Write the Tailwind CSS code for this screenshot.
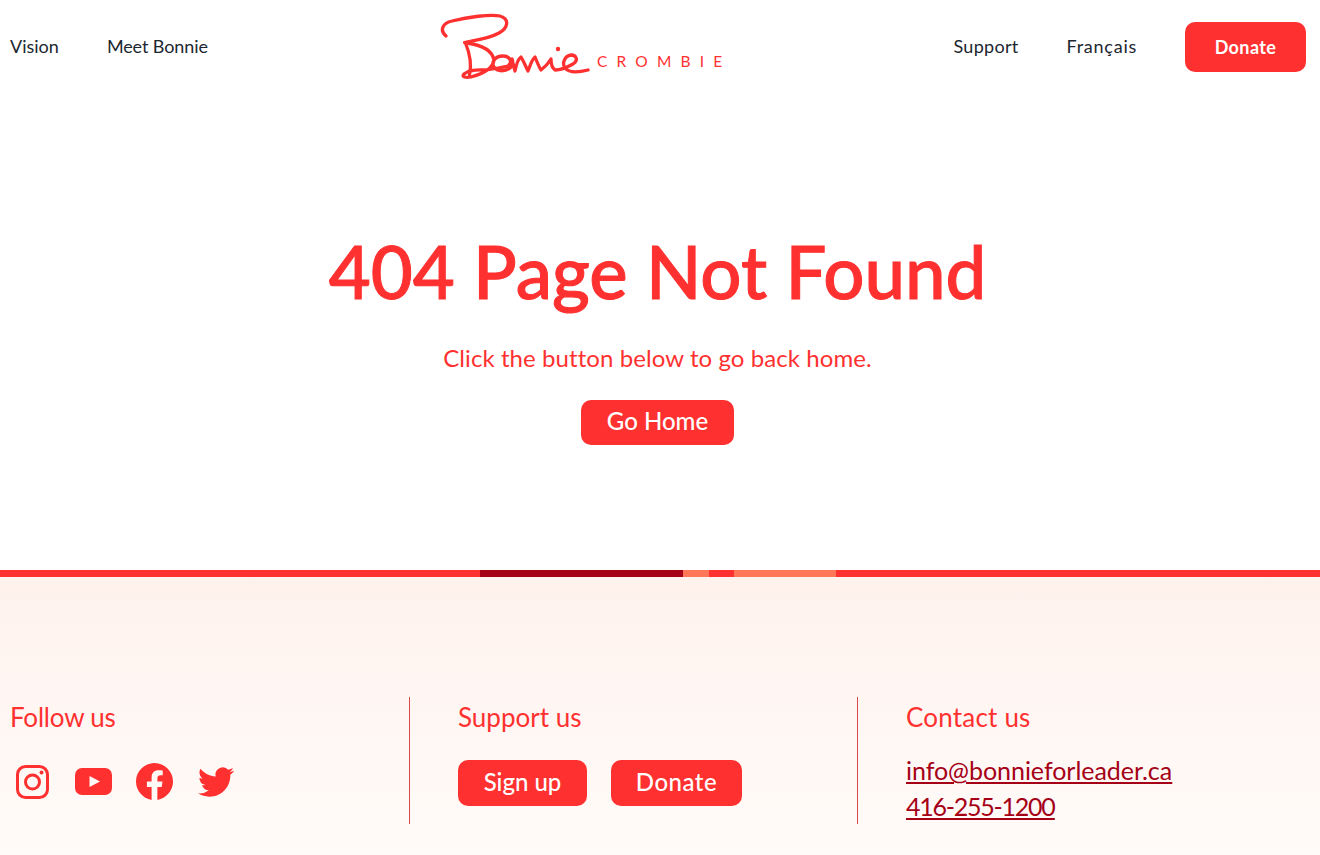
<!DOCTYPE html>
<html lang="en">

<head>
    <meta charset="UTF-8">
    <meta name="viewport" content="width=device-width, initial-scale=1.0">
    <title>Page Not Found</title>
    <script src="https://cdn.jsdelivr.net/npm/@tailwindcss/browser@4"></script>
</head>

<body class="bg-white font-['Lato',sans-serif] h-[855px] overflow-hidden flex flex-col">
    <header class="h-[94px] flex items-center pl-[10px] pr-[14px]">
        <nav class="flex gap-[48px] pb-[1px] text-[18px] text-[#1c2730] w-[430px]">
            <a href="#">Vision</a>
            <a href="#" class="tracking-[-0.1px]">Meet Bonnie</a>
        </nav>
        <a href="#" class="flex items-end">
            <svg class="w-[152px] h-[70px]" viewBox="0 0 152 70" fill="none" stroke="#ff3130" stroke-width="3.3" stroke-linecap="round" stroke-linejoin="round">
                <path d="M6 24C-1 18 3 11 12 9C28 5 50 2 60 4C70 7 68 16 59 21C48 27 36 28 24.5 30.5"/>
                <path d="M25.5 31C30 42 32 52 29.5 63"/>
                <path d="M27 31C42 33 52 38 54 48C53 57 42 62 31 65C26 66 21 65 24 62C30 57 38 58 45 58C52 57 60 56 68 54C73 50 70 44 63 44C55 44 51 50 54 55C57 60 66 60 71 55C73 52 73 49 72 47C73 52 74 55 75 59C76 54 78 47 81 45C84 50 86 55 88 59C90 54 92 47 95 45C97 50 99 55 101 58C105 55 108 52 111 47C111 52 112 56 115 58C120 58 126 56 133 52C139 48 136 43 131 43C124 44 122 52 125 56C129 61 140 60 148 58"/>
                <circle cx="118" cy="37" r="2.2" fill="#ff3130" stroke="none"/>
            </svg>
            <span class="text-[15.5px] leading-[16px] tracking-[9.2px] text-[#ff3130] ml-[5px] mb-[13px] mr-[-9px]">CROMBIE</span>
        </a>
        <div class="ml-auto flex items-center justify-end gap-[48px] text-[18px] text-[#1c2730]">
            <a href="#" class="pb-[1px] tracking-[0.3px]">Support</a>
            <a href="#" class="pb-[1px] tracking-[0.75px]">Français</a>
            <a href="#" class="w-[121px] h-[50px] flex items-center justify-center bg-[#ff3130] text-white font-bold tracking-[0.4px] rounded-[10px]">Donate</a>
        </div>
    </header>

    <main class="h-[476px] flex flex-col items-center pt-[137px] pr-[5px]">
        <h1 class="text-[72.5px] leading-[80px] font-medium text-[#ff3130] [-webkit-text-stroke:1px_#ff3130]">404 Page Not Found</h1>
        <p class="mt-[31px] text-[24px] leading-[32px] tracking-[0.08px] text-[#ff3130]">Click the button below to go back home.</p>
        <a href="#" class="mt-[26px] w-[153px] h-[45px] pb-[3px] flex items-center justify-center bg-[#ff3130] text-white text-[24px] font-medium rounded-[10px]">Go Home</a>
    </main>

    <div class="h-[7px] flex shrink-0">
        <div class="w-[480px] bg-[#ff3130]"></div>
        <div class="w-[203px] bg-[#a50016]"></div>
        <div class="w-[26px] bg-[#ff7757]"></div>
        <div class="w-[25px] bg-[#ff3130]"></div>
        <div class="w-[102px] bg-[#ff7757]"></div>
        <div class="flex-1 bg-[#ff3130]"></div>
    </div>

    <footer class="flex-1 bg-linear-to-b from-[#fff2ed] to-[#fffbf9] pt-[120px] flex items-start">
        <div class="w-[410px] h-[127px] pl-[10px] border-r border-[#d9484a]">
            <h2 class="text-[26px] leading-[40px] tracking-[-0.2px] text-[#ff3130]">Follow us</h2>
            <div class="mt-[26px] flex items-center">
                <svg class="ml-[6px] w-[33px] h-[34px]" viewBox="0 0 33 34" fill="none" stroke="#ff3130" stroke-width="3">
                    <rect x="1.5" y="1.5" width="30" height="31" rx="8"/>
                    <circle cx="16.5" cy="17" r="7"/>
                    <circle cx="25.5" cy="7.5" r="2" fill="#ff3130" stroke="none"/>
                </svg>
                <svg class="ml-[26px] w-[37px] h-[27px]" viewBox="0 0 37 27">
                    <rect width="37" height="27" rx="7" fill="#ff3130"/>
                    <path d="M14.5 8L25 13.5L14.5 19z" fill="#fff8f6"/>
                </svg>
                <svg class="ml-[24px] w-[37px] h-[37px]" viewBox="0 0 24 24" fill="#ff3130">
                    <path d="M24 12.073c0-6.627-5.373-12-12-12s-12 5.373-12 12c0 5.99 4.388 10.954 10.125 11.854v-8.385H7.078v-3.47h3.047V9.43c0-3.007 1.792-4.669 4.533-4.669 1.312 0 2.686.235 2.686.235v2.953H15.83c-1.491 0-1.956.925-1.956 1.874v2.25h3.328l-.532 3.47h-2.796v8.385C19.612 23.027 24 18.062 24 12.073z"/>
                </svg>
                <svg class="ml-[25px] w-[36px] h-[36px]" viewBox="0 0 24 24" fill="#ff3130">
                    <path d="M23.953 4.57a10 10 0 01-2.825.775 4.958 4.958 0 002.163-2.723c-.951.555-2.005.959-3.127 1.184a4.92 4.92 0 00-8.384 4.482C7.69 8.095 4.067 6.13 1.64 3.162a4.822 4.822 0 00-.666 2.475c0 1.71.87 3.213 2.188 4.096a4.904 4.904 0 01-2.228-.616v.06a4.923 4.923 0 003.946 4.827 4.996 4.996 0 01-2.212.085 4.936 4.936 0 004.604 3.417 9.867 9.867 0 01-6.102 2.105c-.39 0-.779-.023-1.17-.067a13.995 13.995 0 007.557 2.209c9.053 0 13.998-7.496 13.998-13.985 0-.21 0-.42-.015-.63A9.935 9.935 0 0024 4.59z"/>
                </svg>
            </div>
        </div>
        <div class="w-[448px] h-[127px] pl-[48px] border-r border-[#d9484a]">
            <h2 class="text-[26px] leading-[40px] text-[#ff3130]">Support us</h2>
            <div class="mt-[23px] flex gap-[24px]">
                <a href="#" class="w-[129px] h-[46px] pb-[2px] flex items-center justify-center bg-[#ff3130] text-white text-[24px] font-medium rounded-[10px]">Sign up</a>
                <a href="#" class="w-[131px] h-[46px] pb-[2px] flex items-center justify-center bg-[#ff3130] text-white text-[24px] font-medium tracking-[0.5px] rounded-[10px]">Donate</a>
            </div>
        </div>
        <div class="pl-[48px]">
            <h2 class="text-[26px] leading-[40px] tracking-[0.2px] text-[#ff3130]">Contact us</h2>
            <div class="mt-[15px] text-[25px] leading-[36px] text-[#a50016] underline flex flex-col items-start">
                <a href="#" class="tracking-[-0.04px]">info@bonnieforleader.ca</a>
                <a href="#" class="tracking-[-1.25px]">416-255-1200</a>
            </div>
        </div>
    </footer>
</body>

</html>
